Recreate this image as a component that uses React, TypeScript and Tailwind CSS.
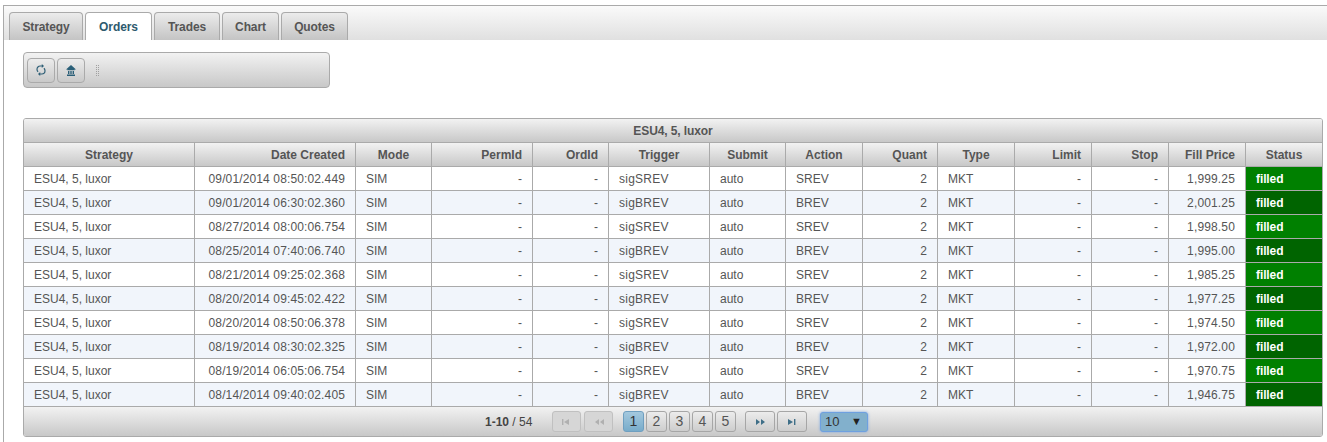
import type { ReactNode } from "react"

const TABS: { label: string; width: string }[] = [
  { label: "Strategy", width: "w-[74px]" },
  { label: "Orders", width: "w-[67px]" },
  { label: "Trades", width: "w-[66px]" },
  { label: "Chart", width: "w-[57px]" },
  { label: "Quotes", width: "w-[67px]" },
]

const COLUMNS: { label: string; width: number; head: string; body: string }[] = [
  { label: "Strategy", width: 171, head: "text-center", body: "text-left" },
  { label: "Date Created", width: 161, head: "text-right", body: "text-right tracking-[0.13px]" },
  { label: "Mode", width: 76, head: "text-center", body: "text-left" },
  { label: "PermId", width: 101, head: "text-right", body: "text-right" },
  { label: "OrdId", width: 76, head: "text-right", body: "text-right" },
  { label: "Trigger", width: 101, head: "text-center", body: "text-left tracking-[0.25px]" },
  { label: "Submit", width: 76, head: "text-center", body: "text-left" },
  { label: "Action", width: 77, head: "text-center", body: "text-left" },
  { label: "Quant", width: 75, head: "text-right", body: "text-right" },
  { label: "Type", width: 77, head: "text-center", body: "text-left" },
  { label: "Limit", width: 77, head: "text-right", body: "text-right" },
  { label: "Stop", width: 77, head: "text-right", body: "text-right" },
  { label: "Fill Price", width: 77, head: "text-right", body: "text-right tracking-[0.15px]" },
  { label: "Status", width: 76, head: "text-center", body: "text-left" },
]

const ORDERS: [string, string, string][] = [
  ["09/01/2014 08:50:02.449", "SREV", "1,999.25"],
  ["09/01/2014 06:30:02.360", "BREV", "2,001.25"],
  ["08/27/2014 08:00:06.754", "SREV", "1,998.50"],
  ["08/25/2014 07:40:06.740", "BREV", "1,995.00"],
  ["08/21/2014 09:25:02.368", "SREV", "1,985.25"],
  ["08/20/2014 09:45:02.422", "BREV", "1,977.25"],
  ["08/20/2014 08:50:06.378", "SREV", "1,974.50"],
  ["08/19/2014 08:30:02.325", "BREV", "1,972.00"],
  ["08/19/2014 06:05:06.754", "SREV", "1,970.75"],
  ["08/14/2014 09:40:02.405", "BREV", "1,946.75"],
]

const GRADIENT = "bg-gradient-to-b from-[#f2f2f2] to-[#c8c8c8]"

function ToolButton({ children }: { children: ReactNode }) {
  return (
    <button className="flex h-[25px] w-[28px] items-center justify-center rounded-[4px] border border-[#aaaaaa] bg-gradient-to-b from-[#ececec] to-[#c9c9c9]">
      {children}
    </button>
  )
}

function RefreshIcon() {
  return (
    <svg width="10" height="12" viewBox="0 0 10 12" fill="none" stroke="#2f5f76" strokeWidth="1.2">
      <path d="M6 2H4.2C2.4 2 1 3.5 1 5.2c0 1 .4 1.9 1.1 2.5" />
      <path d="M4 10h1.8C7.6 10 9 8.5 9 6.8c0-1-.4-1.9-1.1-2.5" />
      <path d="M5.8 0v4l2.2-2zM4.2 8v4L2 10z" fill="#2f5f76" stroke="none" />
    </svg>
  )
}

function HomeIcon() {
  return (
    <svg width="10" height="11" viewBox="0 0 10 11" fill="#2a5f78">
      <path d="M5 0 0 4.6h1.4v.6h7.2v-.6H10z" />
      <path d="M2 6h1.4v3H2zM4.3 6h1.4v3H4.3zM6.6 6H8v3H6.6zM1 9.4h8V11H1z" />
    </svg>
  )
}

function GripIcon() {
  const dots = [0, 2, 4, 6, 8, 10]
  return (
    <svg width="4" height="11" viewBox="0 0 4 11" fill="#a0a0a0">
      {dots.map((y) => (
        <g key={y}>
          <rect x="0" y={y} width="1" height="1" />
          <rect x="2" y={y} width="1" height="1" />
        </g>
      ))}
    </svg>
  )
}

// nav glyphs of the pager: kind is one of first, prev, next, last
function NavIcon({ kind, color }: { kind: "first" | "prev" | "next" | "last"; color: string }) {
  const paths = {
    first: "M1 1h1.4v6H1zM8 1v6L3 4z",
    prev: "M6 1v6L2 4zM11 1v6L7 4z",
    next: "M2 1v6l4-3zM7 1v6l4-3z",
    last: "M2 1v6l5-3zM8 1h1.4v6H8z",
  }
  return (
    <svg width="12" height="8" viewBox="0 0 12 8" fill={color}>
      <path d={paths[kind]} />
    </svg>
  )
}

function NavButton({ kind, disabled }: { kind: "first" | "prev" | "next" | "last"; disabled?: boolean }) {
  return (
    <button
      className={
        disabled
          ? "flex h-[21px] w-[29px] items-center justify-center rounded-[3px] border border-[#c0c0c0] bg-[#d6d6d6]"
          : "flex h-[21px] w-[30px] items-center justify-center rounded-[3px] border border-[#a6a6a6] bg-gradient-to-b from-[#ececec] to-[#cdcdcd]"
      }
    >
      <NavIcon kind={kind} color={disabled ? "#b0b0b0" : "#3f6f88"} />
    </button>
  )
}

function PageButton({ n, active }: { n: number; active?: boolean }) {
  return (
    <button
      className={
        active
          ? "flex h-[21px] w-[21px] items-center justify-center rounded-[3px] border border-[#6f9fc0] bg-gradient-to-b from-[#a4c8de] to-[#78acca] text-[14px] text-[#333333]"
          : "flex h-[21px] w-[21px] items-center justify-center rounded-[3px] border border-[#a6a6a6] bg-gradient-to-b from-[#ececec] to-[#cdcdcd] text-[14px] text-[#555555]"
      }
    >
      {n}
    </button>
  )
}

export default function App() {
  return (
    <div className="h-[442px] w-[1327px] overflow-hidden bg-white font-['Liberation_Sans',Arial,sans-serif] text-[12px] text-[#555555]">
      <div className="ml-[3px] mt-[5px] h-[437px] border-l border-t border-[#aaaaaa]">
        <div className="flex h-[34px] items-end gap-[2px] bg-gradient-to-b from-[#fafafa] to-[#e0e0e0] pl-[5px]">
          {TABS.map((tab) => (
            <div
              key={tab.label}
              className={
                tab.label === "Orders"
                  ? `flex h-[28px] items-center justify-center rounded-t-[4px] border border-b-0 border-[#aaaaaa] bg-white font-bold tracking-[-0.1px] text-[#2e5a6e] ${tab.width}`
                  : `flex h-[28px] items-center justify-center rounded-t-[4px] border border-b-0 border-[#aaaaaa] bg-gradient-to-b from-[#ececec] to-[#c4c4c4] font-bold tracking-[-0.1px] text-[#555555] ${tab.width}`
              }
            >
              {tab.label}
            </div>
          ))}
        </div>

        <div className={`ml-[19px] mt-[12px] flex h-[36px] w-[307px] items-center gap-[2px] rounded-[4px] border border-[#aaaaaa] pl-[3px] ${GRADIENT}`}>
          <ToolButton>
            <RefreshIcon />
          </ToolButton>
          <ToolButton>
            <HomeIcon />
          </ToolButton>
          <div className="ml-[9px] flex items-center">
            <GripIcon />
          </div>
        </div>

        <div className="ml-[19px] mt-[30px] w-[1300px] overflow-hidden rounded-[3px] border border-[#aaaaaa]">
          <div className={`flex h-[24px] items-center justify-center border-b border-[#aaaaaa] font-bold tracking-[-0.1px] ${GRADIENT}`}>
            ESU4, 5, luxor
          </div>
          <table className="w-[1298px] table-fixed border-separate border-spacing-0">
            <colgroup>
              {COLUMNS.map((col) => (
                <col key={col.label} style={{ width: col.width }} />
              ))}
            </colgroup>
            <thead>
              <tr>
                {COLUMNS.map((col, i) => (
                  <th
                    key={col.label}
                    className={`h-[24px] border-b border-[#aaaaaa] px-[10px] py-0 font-bold ${GRADIENT} ${col.head} ${i < 13 ? "border-r" : ""}`}
                  >
                    {col.label}
                  </th>
                ))}
              </tr>
            </thead>
            <tbody>
              {ORDERS.map(([date, signal, price], r) => {
                const cells = [
                  "ESU4, 5, luxor", date, "SIM", "-", "-", `sig${signal}`, "auto",
                  signal, "2", "MKT", "-", "-", price,
                ]
                return (
                  <tr key={date} className={r % 2 === 0 ? "bg-white" : "bg-[#f1f5fb]"}>
                    {cells.map((text, i) => (
                      <td
                        key={i}
                        className={`h-[24px] border-b border-r border-[#aaaaaa] px-[10px] py-0 ${COLUMNS[i].body}`}
                      >
                        {text}
                      </td>
                    ))}
                    <td
                      className={`h-[24px] border-b border-[#aaaaaa] px-[10px] py-0 font-bold tracking-[-0.1px] text-white ${r % 2 === 0 ? "bg-[#008000]" : "bg-[#006400]"}`}
                    >
                      filled
                    </td>
                  </tr>
                )
              })}
            </tbody>
          </table>
          <div className={`flex h-[29px] items-center pl-[461px] ${GRADIENT}`}>
            <span className="w-[67px] text-[#444444]">
              <b>1-10</b> / 54
            </span>
            <div className="flex gap-[3px]">
              <NavButton kind="first" disabled />
              <NavButton kind="prev" disabled />
            </div>
            <div className="ml-[10px] flex gap-[2px]">
              <PageButton n={1} active />
              <PageButton n={2} />
              <PageButton n={3} />
              <PageButton n={4} />
              <PageButton n={5} />
            </div>
            <div className="ml-[9px] flex gap-[2px]">
              <NavButton kind="next" />
              <NavButton kind="last" />
            </div>
            <div className="ml-[13px] flex h-[20px] w-[48px] items-center justify-between rounded-[3px] border border-[#6ea0e0] bg-[#82b0cc] pl-[4px] pr-[5px] text-[13px] text-[#333333] shadow-[0_0_3px_#7aa6e0]">
              <span>10</span>
              <span className="text-[11px] text-[#222222]">▼</span>
            </div>
          </div>
        </div>
      </div>
    </div>
  )
}
